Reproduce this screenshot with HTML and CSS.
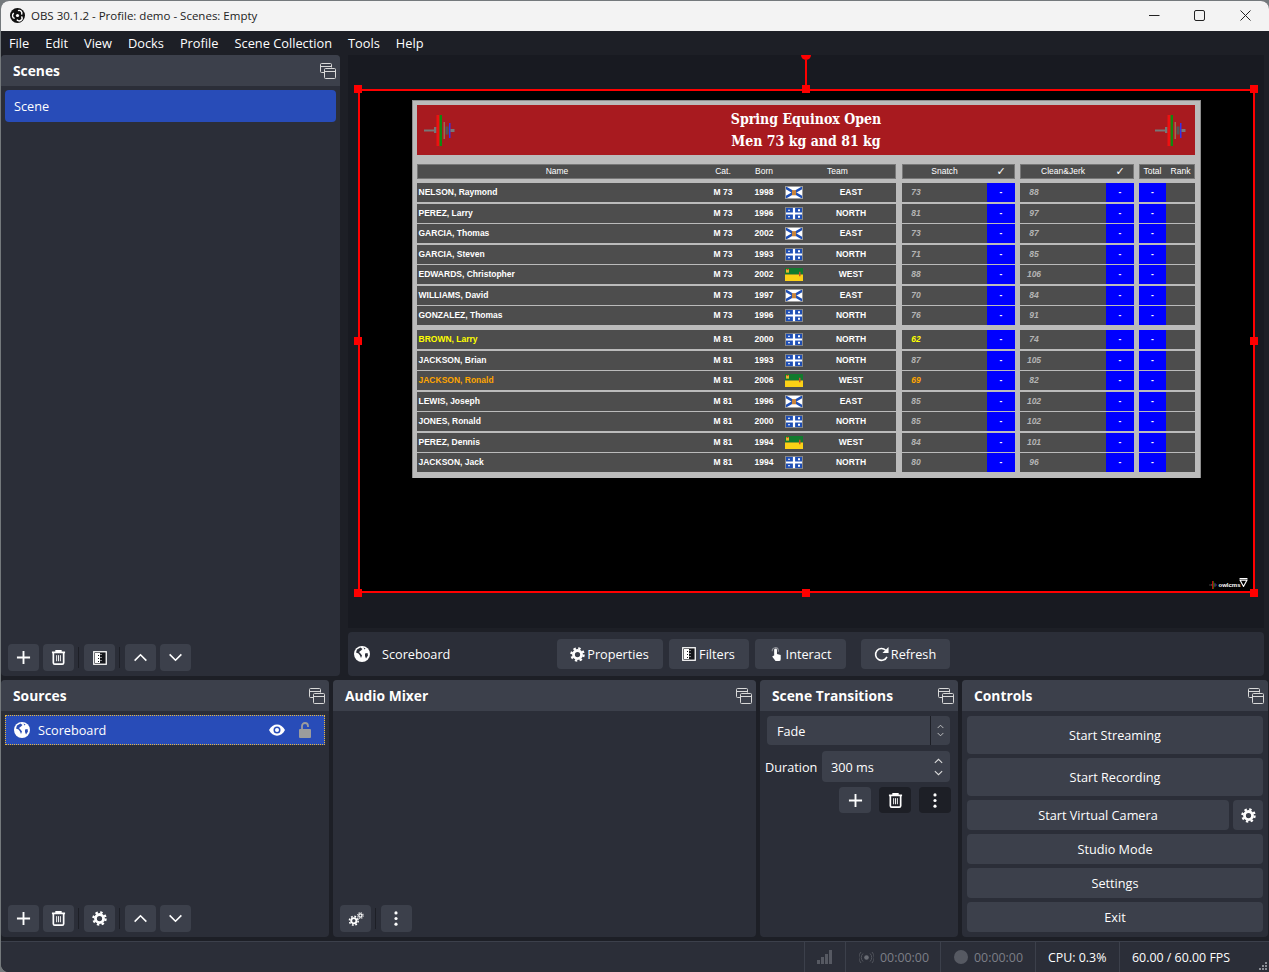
FILE: index.html
```html
<!DOCTYPE html>
<html lang="en">
<head>
<meta charset="utf-8">
<title>OBS 30.1.2 - Profile: demo - Scenes: Empty</title>
<link rel="stylesheet" href="styles.css">
</head>
<body>
<svg class="defs" width="0" height="0" aria-hidden="true">
  <symbol id="i-plus" viewBox="0 0 16 16"><path d="M8 1v14M1 8h14" fill="none" stroke="currentColor" stroke-width="2"/></symbol>
  <symbol id="i-trash" viewBox="0 0 16 16"><path d="M1 2.5h14M5.5 2.500V1h5v1.500M2.500 3v10.500a1.500 1.500 0 0 0 1.500 1.500h8a1.500 1.500 0 0 0 1.500-1.500V3" fill="none" stroke="currentColor" stroke-width="1.800"/><path d="M6 5.500v6.500M8 5.500v6.500M10 5.500v6.500" fill="none" stroke="currentColor" stroke-width="1"/></symbol>
  <symbol id="i-filter" viewBox="0 0 14 14"><rect x=".75" y=".75" width="12.500" height="12.500" fill="#15161b" stroke="currentColor" stroke-width="1.300"/><rect x="2" y="2" width="3" height="10" fill="currentColor"/><path d="M5 2h2v2H5zM6 4h1v1H6zM5 5h2v2H5zM6 7h1v1H6zM5 8h2v2H5zM6 10h1v1H6zM5 11h2v1H5zM7.500 3h1v1h-1zM7.500 6h1v1h-1zM7.500 9h1v1h-1z" fill="currentColor"/></symbol>
  <symbol id="i-up" viewBox="0 0 16 10"><path d="M1.500 8.500 8 2l6.500 6.500" fill="none" stroke="currentColor" stroke-width="1.800"/></symbol>
  <symbol id="i-down" viewBox="0 0 16 10"><path d="M1.500 1.500 8 8l6.500-6.500" fill="none" stroke="currentColor" stroke-width="1.800"/></symbol>
  <symbol id="i-gear" viewBox="0 0 16 16"><circle cx="8" cy="8" r="4.300" fill="none" stroke="currentColor" stroke-width="3"/><circle cx="8" cy="8" r="6.500" fill="none" stroke="currentColor" stroke-width="2.400" stroke-dasharray="2.550 2.550"/></symbol>
  <symbol id="i-gears" viewBox="0 0 18 16"><g fill="none" stroke="currentColor"><circle cx="6.500" cy="10" r="3" stroke-width="2.200"/><circle cx="6.500" cy="10" r="5" stroke-width="1.800" stroke-dasharray="2 1.930"/><circle cx="14" cy="4" r="1.800" stroke-width="1.400"/><circle cx="14" cy="4" r="3.200" stroke-width="1.200" stroke-dasharray="1.300 1.210"/></g></symbol>
  <symbol id="i-dots" viewBox="0 0 4 16"><circle cx="2" cy="2" r="1.700" fill="currentColor"/><circle cx="2" cy="8" r="1.700" fill="currentColor"/><circle cx="2" cy="14" r="1.700" fill="currentColor"/></symbol>
  <symbol id="i-float" viewBox="0 0 16 16"><path d="M.5 1.500a1 1 0 0 1 1-1h9a1 1 0 0 1 1 1v3M.5 1.500v7a1 1 0 0 0 1 1h2.500M.5 3.500h11" fill="none" stroke="currentColor"/><rect x="4.500" y="5.500" width="11" height="10" rx="1" fill="none" stroke="currentColor"/><path d="M4.500 8.500h11" stroke="currentColor"/></symbol>
  <symbol id="i-globe" viewBox="0 0 16 16"><circle cx="8" cy="8" r="8" fill="currentColor"/><path d="M6.500 1.500 3 3.500 2 6.500l2.500 1L6 9.500 7 12l1-2.500-1.500-2L5 6l2-1.500 1.500-1.500zM11 7.500l2.500-.5.500 2.500-2 3-1-2.500zM9.500 1.500l2 1-1 1z" fill="#2c4db5"/></symbol>
  <symbol id="i-globe-d" viewBox="0 0 16 16"><circle cx="8" cy="8" r="8" fill="currentColor"/><path d="M6.500 1.500 3 3.500 2 6.500l2.500 1L6 9.500 7 12l1-2.500-1.500-2L5 6l2-1.500 1.500-1.500zM11 7.500l2.500-.5.500 2.500-2 3-1-2.500zM9.500 1.500l2 1-1 1z" fill="#2b2e38"/></symbol>
  <symbol id="i-hand" viewBox="0 0 12 16"><path d="M3.500 9V3a1.500 1.500 0 0 1 3 0v4.500l4 1V13a2 2 0 0 1-2 2H5L1.500 10.500 2 9.500z" fill="currentColor"/><path d="M1.500 4.500a3.200 3.200 0 0 1 6.500-1V5" fill="none" stroke="#8d8f96" stroke-width="1.200"/></symbol>
  <symbol id="i-refresh" viewBox="0 0 16 16"><path d="M13.800 10.500A6.300 6.300 0 1 1 12.500 3.500" fill="none" stroke="currentColor" stroke-width="1.700"/><path d="M15.500 0v6.500H9z" fill="currentColor"/></symbol>
  <symbol id="bar" viewBox="0 0 31 31"><rect x="0" y="14.500" width="12" height="2" fill="#777"/><rect x="10" y="12" width="2.500" height="6" fill="#777"/><rect x="12.500" y="0" width="5" height="31" fill="#ee1111"/><rect x="15.500" y="0" width="2.500" height="31" fill="#118811"/><rect x="19.500" y="7" width="1.500" height="17" fill="#a06b4e"/><rect x="21.500" y="11.500" width="3" height="8" fill="#555"/><rect x="25" y="8" width="1.500" height="15" fill="#3333ee"/><rect x="26.500" y="14" width="4" height="3" fill="#777"/></symbol>
  <symbol id="f-ns" viewBox="0 0 18 14" preserveAspectRatio="none"><rect width="18" height="14" fill="#fff"/><path d="M0 1.500 18 12.500M18 1.500 0 12.500" stroke="#1f4fb5" stroke-width="2.600"/><rect x="7" y="4.500" width="4" height="5.500" fill="#c9843b"/><rect x=".5" y=".5" width="17" height="13" fill="none" stroke="#999"/></symbol>
  <symbol id="f-qc" viewBox="0 0 18 14" preserveAspectRatio="none"><rect width="18" height="14" fill="#1f4fb5"/><path d="M0 7h18M9 0v14" stroke="#fff" stroke-width="2.200"/><path d="M3 3h2v1H3zM13 2.500h2v2h-2zM3 10h2v1H3zM13 9.500h2v2h-2z" fill="#fff"/><rect x=".5" y=".5" width="17" height="13" fill="none" stroke="#888"/></symbol>
  <symbol id="f-sk" viewBox="0 0 18 14" preserveAspectRatio="none"><rect width="18" height="7" fill="#127a2e"/><rect y="7" width="18" height="7" fill="#fcd116"/><rect x="1" y="1" width="3" height="4" fill="#e6b82e"/><rect x="1.500" y="1" width="2" height="1.200" fill="#c33"/><path d="M14 4h1.500v5H14z" fill="#c8502a"/></symbol>
</svg>

<div class="window">
  <header class="titlebar">
    <svg class="obs-logo" viewBox="0 0 16 16"><circle cx="8" cy="8" r="8" fill="#111"/><g fill="none" stroke="#fff" stroke-width="1.500"><path d="M8.500 2.800a3 3 0 0 1 3.800 4.200"/><path d="M12.300 9a3 3 0 0 1-5 3.500"/><path d="M5 11a3 3 0 0 1-.9-5.500"/></g><circle cx="8" cy="8" r="1.700" fill="#fff"/></svg>
    <span class="title-text">OBS 30.1.2 - Profile: demo - Scenes: Empty</span>
    <div class="win-controls">
      <span class="win-btn"><svg width="11" height="11" viewBox="0 0 11 11"><path d="M0 5.500h10.500" stroke="#222"/></svg></span>
      <span class="win-btn"><svg width="11" height="11" viewBox="0 0 11 11"><rect x=".5" y=".5" width="10" height="10" rx="1.500" fill="none" stroke="#222"/></svg></span>
      <span class="win-btn"><svg width="11" height="11" viewBox="0 0 11 11"><path d="M.5.500l10 10M10.500.500l-10 10" stroke="#222"/></svg></span>
    </div>
  </header>

  <nav class="menubar">
    <span class="menu-item">File</span><span class="menu-item">Edit</span><span class="menu-item">View</span><span class="menu-item">Docks</span><span class="menu-item">Profile</span><span class="menu-item">Scene Collection</span><span class="menu-item">Tools</span><span class="menu-item">Help</span>
  </nav>

  <div class="upper">
    <section class="dock dock-scenes">
      <div class="dock-head"><span>Scenes</span><svg class="float-ic"><use href="#i-float"/></svg></div>
      <div class="dock-body">
        <div class="scene-item">Scene</div>
      </div>
      <div class="toolbar">
        <button class="tool"><svg class="ic16"><use href="#i-plus"/></svg></button>
        <button class="tool"><svg class="ic16"><use href="#i-trash"/></svg></button>
        <i class="sep"></i>
        <button class="tool"><svg class="ic14"><use href="#i-filter"/></svg></button>
        <i class="sep"></i>
        <button class="tool"><svg class="ic-ch"><use href="#i-up"/></svg></button>
        <button class="tool"><svg class="ic-ch"><use href="#i-down"/></svg></button>
      </div>
    </section>

    <div class="center">
      <div class="preview">
        <div class="canvas">
          <div class="board">
            <div class="board-title">
              <svg class="bar"><use href="#bar"/></svg>
              <div class="board-name">Spring Equinox Open<br>Men 73 kg and 81 kg</div>
              <svg class="bar"><use href="#bar"/></svg>
            </div>
            <div class="row row-head">
              <div class="g-ath"><b class="c-name">Name</b><b>Cat.</b><b>Born</b><b class="c-team2">Team</b></div>
              <div class="g-lift g-sn"><b class="h-lift">Snatch</b><b>✓</b></div>
              <div class="g-lift g-cj"><b class="h-lift">Clean&amp;Jerk</b><b>✓</b></div>
              <div class="g-tot"><b>Total</b><b>Rank</b></div>
            </div>

            <div class="group">
              <div class="row"><div class="g-ath"><b class="c-name">NELSON, Raymond</b><b>M 73</b><b>1998</b><svg class="flag"><use href="#f-ns"/></svg><b>EAST</b></div><div class="g-lift g-sn"><em>73</em><b class="blue">-</b></div><div class="g-lift g-cj"><em>88</em><b class="blue">-</b></div><div class="g-tot"><b class="blue">-</b><b></b></div></div>
              <div class="row"><div class="g-ath"><b class="c-name">PEREZ, Larry</b><b>M 73</b><b>1996</b><svg class="flag"><use href="#f-qc"/></svg><b>NORTH</b></div><div class="g-lift g-sn"><em>81</em><b class="blue">-</b></div><div class="g-lift g-cj"><em>97</em><b class="blue">-</b></div><div class="g-tot"><b class="blue">-</b><b></b></div></div>
              <div class="row"><div class="g-ath"><b class="c-name">GARCIA, Thomas</b><b>M 73</b><b>2002</b><svg class="flag"><use href="#f-ns"/></svg><b>EAST</b></div><div class="g-lift g-sn"><em>73</em><b class="blue">-</b></div><div class="g-lift g-cj"><em>87</em><b class="blue">-</b></div><div class="g-tot"><b class="blue">-</b><b></b></div></div>
              <div class="row"><div class="g-ath"><b class="c-name">GARCIA, Steven</b><b>M 73</b><b>1993</b><svg class="flag"><use href="#f-qc"/></svg><b>NORTH</b></div><div class="g-lift g-sn"><em>71</em><b class="blue">-</b></div><div class="g-lift g-cj"><em>85</em><b class="blue">-</b></div><div class="g-tot"><b class="blue">-</b><b></b></div></div>
              <div class="row"><div class="g-ath"><b class="c-name">EDWARDS, Christopher</b><b>M 73</b><b>2002</b><svg class="flag"><use href="#f-sk"/></svg><b>WEST</b></div><div class="g-lift g-sn"><em>88</em><b class="blue">-</b></div><div class="g-lift g-cj"><em>106</em><b class="blue">-</b></div><div class="g-tot"><b class="blue">-</b><b></b></div></div>
              <div class="row"><div class="g-ath"><b class="c-name">WILLIAMS, David</b><b>M 73</b><b>1997</b><svg class="flag"><use href="#f-ns"/></svg><b>EAST</b></div><div class="g-lift g-sn"><em>70</em><b class="blue">-</b></div><div class="g-lift g-cj"><em>84</em><b class="blue">-</b></div><div class="g-tot"><b class="blue">-</b><b></b></div></div>
              <div class="row"><div class="g-ath"><b class="c-name">GONZALEZ, Thomas</b><b>M 73</b><b>1996</b><svg class="flag"><use href="#f-qc"/></svg><b>NORTH</b></div><div class="g-lift g-sn"><em>76</em><b class="blue">-</b></div><div class="g-lift g-cj"><em>91</em><b class="blue">-</b></div><div class="g-tot"><b class="blue">-</b><b></b></div></div>
            </div>

            <div class="group">
              <div class="row"><div class="g-ath"><b class="c-name next">BROWN, Larry</b><b>M 81</b><b>2000</b><svg class="flag"><use href="#f-qc"/></svg><b>NORTH</b></div><div class="g-lift g-sn"><em class="next">62</em><b class="blue">-</b></div><div class="g-lift g-cj"><em>74</em><b class="blue">-</b></div><div class="g-tot"><b class="blue">-</b><b></b></div></div>
              <div class="row"><div class="g-ath"><b class="c-name">JACKSON, Brian</b><b>M 81</b><b>1993</b><svg class="flag"><use href="#f-qc"/></svg><b>NORTH</b></div><div class="g-lift g-sn"><em>87</em><b class="blue">-</b></div><div class="g-lift g-cj"><em>105</em><b class="blue">-</b></div><div class="g-tot"><b class="blue">-</b><b></b></div></div>
              <div class="row"><div class="g-ath"><b class="c-name after">JACKSON, Ronald</b><b>M 81</b><b>2006</b><svg class="flag"><use href="#f-sk"/></svg><b>WEST</b></div><div class="g-lift g-sn"><em class="after">69</em><b class="blue">-</b></div><div class="g-lift g-cj"><em>82</em><b class="blue">-</b></div><div class="g-tot"><b class="blue">-</b><b></b></div></div>
              <div class="row"><div class="g-ath"><b class="c-name">LEWIS, Joseph</b><b>M 81</b><b>1996</b><svg class="flag"><use href="#f-ns"/></svg><b>EAST</b></div><div class="g-lift g-sn"><em>85</em><b class="blue">-</b></div><div class="g-lift g-cj"><em>102</em><b class="blue">-</b></div><div class="g-tot"><b class="blue">-</b><b></b></div></div>
              <div class="row"><div class="g-ath"><b class="c-name">JONES, Ronald</b><b>M 81</b><b>2000</b><svg class="flag"><use href="#f-qc"/></svg><b>NORTH</b></div><div class="g-lift g-sn"><em>85</em><b class="blue">-</b></div><div class="g-lift g-cj"><em>102</em><b class="blue">-</b></div><div class="g-tot"><b class="blue">-</b><b></b></div></div>
              <div class="row"><div class="g-ath"><b class="c-name">PEREZ, Dennis</b><b>M 81</b><b>1994</b><svg class="flag"><use href="#f-sk"/></svg><b>WEST</b></div><div class="g-lift g-sn"><em>84</em><b class="blue">-</b></div><div class="g-lift g-cj"><em>101</em><b class="blue">-</b></div><div class="g-tot"><b class="blue">-</b><b></b></div></div>
              <div class="row"><div class="g-ath"><b class="c-name">JACKSON, Jack</b><b>M 81</b><b>1994</b><svg class="flag"><use href="#f-qc"/></svg><b>NORTH</b></div><div class="g-lift g-sn"><em>80</em><b class="blue">-</b></div><div class="g-lift g-cj"><em>96</em><b class="blue">-</b></div><div class="g-tot"><b class="blue">-</b><b></b></div></div>
            </div>
          </div>

          <div class="watermark">
            <svg class="wm-bar"><use href="#bar"/></svg><span class="wm-text">owlcms</span>
            <svg class="wm-tri" viewBox="0 0 8 8"><path d="M.5.500h7M1 2l3 5.500L7 2z" fill="none" stroke="#fff"/></svg>
          </div>

          <i class="rot-line"></i><i class="rot-knob"></i>
          <i class="h h-tl"></i><i class="h h-tc"></i><i class="h h-tr"></i>
          <i class="h h-ml"></i><i class="h h-mr"></i>
          <i class="h h-bl"></i><i class="h h-bc"></i><i class="h h-br"></i>
        </div>
      </div>

      <div class="context">
        <svg class="ic16 ctx-globe"><use href="#i-globe-d"/></svg>
        <span class="ctx-name">Scoreboard</span>
        <button class="ctx-btn w-prop"><svg class="ic-ctx"><use href="#i-gear"/></svg>Properties</button>
        <button class="ctx-btn w-filt"><svg class="ic-ctx14"><use href="#i-filter"/></svg>Filters</button>
        <button class="ctx-btn w-int"><svg class="ic-ctx"><use href="#i-hand"/></svg>Interact</button>
        <button class="ctx-btn w-ref"><svg class="ic-ctx"><use href="#i-refresh"/></svg>Refresh</button>
      </div>
    </div>
  </div>

  <div class="lower">
    <section class="dock dock-sources">
      <div class="dock-head low"><span>Sources</span><svg class="float-ic"><use href="#i-float"/></svg></div>
      <div class="dock-body">
        <div class="source-item">
          <svg class="ic16"><use href="#i-globe"/></svg>
          <span class="src-name">Scoreboard</span>
          <svg class="eye" viewBox="0 0 16 12"><path d="M0 6c3.500-7.500 12.500-7.500 16 0-3.500 7.500-12.500 7.500-16 0z" fill="#fff"/><circle cx="8" cy="6" r="3.500" fill="#284cb8"/><circle cx="8" cy="6" r="2" fill="#fff"/></svg>
          <svg class="lock" viewBox="0 0 12 16"><path d="M3 7V4a3 3 0 0 1 6 0v1" fill="none" stroke="#9c9c9c" stroke-width="1.800"/><rect x="0" y="7" width="12" height="9" rx="1" fill="#9c9c9c"/></svg>
        </div>
      </div>
      <div class="toolbar">
        <button class="tool"><svg class="ic16"><use href="#i-plus"/></svg></button>
        <button class="tool"><svg class="ic16"><use href="#i-trash"/></svg></button>
        <i class="sep"></i>
        <button class="tool"><svg class="ic15"><use href="#i-gear"/></svg></button>
        <i class="sep"></i>
        <button class="tool"><svg class="ic-ch"><use href="#i-up"/></svg></button>
        <button class="tool"><svg class="ic-ch"><use href="#i-down"/></svg></button>
      </div>
    </section>

    <section class="dock dock-mixer">
      <div class="dock-head low"><span>Audio Mixer</span><svg class="float-ic"><use href="#i-float"/></svg></div>
      <div class="dock-body"></div>
      <div class="toolbar">
        <button class="tool"><svg class="ic-gears"><use href="#i-gears"/></svg></button>
        <i class="sep"></i>
        <button class="tool"><svg class="ic-dots"><use href="#i-dots"/></svg></button>
      </div>
    </section>

    <section class="dock dock-trans">
      <div class="dock-head low"><span>Scene Transitions</span><svg class="float-ic"><use href="#i-float"/></svg></div>
      <div class="trans-body">
        <div class="combo">
          <span class="combo-text">Fade</span>
          <span class="combo-arrows"><svg class="tiny"><use href="#i-up"/></svg><svg class="tiny"><use href="#i-down"/></svg></span>
        </div>
        <div class="duration">
          <span class="dur-label">Duration</span>
          <div class="spin"><span>300 ms</span><span class="spin-arrows"><svg class="tiny2"><use href="#i-up"/></svg><svg class="tiny2"><use href="#i-down"/></svg></span></div>
        </div>
        <div class="trans-tools">
          <button class="tool"><svg class="ic16"><use href="#i-plus"/></svg></button>
          <button class="tool tool-dark"><svg class="ic16"><use href="#i-trash"/></svg></button>
          <button class="tool tool-dark"><svg class="ic-dots"><use href="#i-dots"/></svg></button>
        </div>
      </div>
    </section>

    <section class="dock dock-controls">
      <div class="dock-head low"><span>Controls</span><svg class="float-ic"><use href="#i-float"/></svg></div>
      <div class="controls-body">
        <button class="ctl ctl-big">Start Streaming</button>
        <button class="ctl ctl-big">Start Recording</button>
        <div class="ctl-row">
          <button class="ctl ctl-grow">Start Virtual Camera</button>
          <button class="ctl ctl-gear"><svg class="ic15"><use href="#i-gear"/></svg></button>
        </div>
        <button class="ctl">Studio Mode</button>
        <button class="ctl">Settings</button>
        <button class="ctl">Exit</button>
      </div>
    </section>
  </div>

  <footer class="statusbar">
    <div class="st st-sig"><svg width="15" height="14" viewBox="0 0 15 14"><path d="M0 10h3v4H0zM4 7h3v7H4zM8 4h3v10H8zM12 0h3v14h-3z" fill="#565962"/></svg></div>
    <div class="st st-live"><svg width="15" height="11" viewBox="0 0 15 11"><circle cx="7.500" cy="5.500" r="2.300" fill="#6a6d75"/><path d="M4 1.500a5.500 5.500 0 0 0 0 8M11 1.500a5.500 5.500 0 0 1 0 8M2 0a8 8 0 0 0 0 11M13 0a8 8 0 0 1 0 11" fill="none" stroke="#53565e"/></svg><span class="dim">00:00:00</span></div>
    <div class="st st-rec"><i class="rec-dot"></i><span class="dim">00:00:00</span></div>
    <div class="st st-cpu">CPU: 0.3%</div>
    <div class="st st-fps">60.00 / 60.00 FPS</div>
    <svg class="grip" width="8" height="8" viewBox="0 0 8 8"><path d="M6 0h2v2H6zM3 3h2v2H3zM6 3h2v2H6zM0 6h2v2H0zM3 6h2v2H3zM6 6h2v2H6z" fill="#8a8d95"/></svg>
  </footer>
</div>
</body>
</html>
```
FILE: styles.css
```css
* { box-sizing: border-box; }
html, body { margin: 0; padding: 0; }
body {
  width: 1269px;
  height: 972px;
  overflow: hidden;
  background: #74797c;
  font-family: "Open Sans", "Liberation Sans", sans-serif;
  font-size: 12.700px;
  color: #fefefe;
}
.defs { position: absolute; }
svg { display: block; flex: none; }
button { font: inherit; color: inherit; border: 0; padding: 0; margin: 0; }

.window {
  margin: 1px 0 0 1px;
  width: 1268px;
  height: 971px;
  display: flex;
  flex-direction: column;
  background: #1d1f26;
  border-radius: 8px 8px 0 8px;
  overflow: hidden;
}

/* title bar */
.titlebar {
  height: 30px;
  flex: none;
  display: flex;
  align-items: center;
  background: #f3f3f3;
  color: #222;
  font-size: 11.500px;
  padding: 0 0 1px 9px;
}
.obs-logo { width: 15px; height: 15px; }
.title-text { margin: 0 0 1px 6px; }
.win-controls { margin-left: auto; display: flex; margin-right: 1px; }
.win-btn { width: 45.500px; height: 30px; display: flex; align-items: center; justify-content: center; }

/* menu */
.menubar {
  height: 24px;
  flex: none;
  display: flex;
  align-items: center;
  font-size: 12.800px;
  background: #1d1f26;
}
.menu-item { padding: 0 8px; }

/* layout */
.upper { height: 621px; flex: none; display: flex; }
.lower { height: 257px; flex: none; margin-top: 4px; display: flex; gap: 4px; }

.dock { display: flex; flex-direction: column; background: #2b2e38; border-radius: 4px; overflow: hidden; }
.dock-scenes { width: 339px; flex: none; }
.dock-sources { width: 328px; }
.dock-mixer { width: 423px; }
.dock-trans { width: 198px; }
.dock-controls { width: 306px; }

.dock-head {
  height: 31px;
  flex: none;
  display: flex;
  align-items: center;
  justify-content: space-between;
  padding: 0 4px 0 12px;
  background: #3c404b;
  font-weight: 700;
  font-size: 13.800px;
}
.float-ic { width: 16px; height: 16px; color: #d8d8d8; }
.dock-body { flex: 1; padding: 4px; min-height: 0; }

.scene-item {
  height: 32px;
  display: flex;
  align-items: center;
  padding-left: 9px;
  background: #284cb8;
  border-radius: 4px;
}
.toolbar { flex: none; display: flex; align-items: center; height: 27px; margin: 0 0 5px 7px; gap: 4px; }
.tool {
  width: 31px;
  height: 27px;
  background: #3c404b;
  border-radius: 4px;
  display: flex;
  align-items: center;
  justify-content: center;
  color: #fefefe;
}
.tool-dark { background: #1d1f26; width: 32px; }
.sep { width: 1px; height: 21px; background: #1d1f26; margin-right: 1px; }
.ic16 { width: 15px; height: 15px; }
.ic15 { width: 15px; height: 15px; }
.ic14 { width: 14px; height: 14px; }
.ic-ch { width: 15px; height: 9px; }
.ic-gears { width: 16px; height: 14px; }
.ic-dots { width: 4px; height: 15px; margin-right: 1px; }

/* preview */
.center { flex: 1; display: flex; flex-direction: column; margin-left: 8px; margin-right: 5px; min-width: 0; }
.preview {
  height: 573px;
  flex: none;
  display: flex;
  align-items: center;
  justify-content: center;
  background: #181a21;
  overflow: hidden;
}
.canvas {
  position: relative;
  width: 895px;
  height: 502px;
  flex: none;
  background: #000;
  outline: 2px solid #ff0000;
  outline-offset: -1px;
  padding-top: 10px;
  margin-top: -1px;
}
.h { position: absolute; width: 8px; height: 8px; background: #ff0000; }
.h-tl { left: -5px; top: -5px; }
.h-tc { left: 443px; top: -5px; }
.h-tr { right: -4px; top: -5px; }
.h-ml { left: -5px; top: 247px; }
.h-mr { right: -4px; top: 247px; }
.h-bl { left: -5px; bottom: -5px; }
.h-bc { left: 443px; bottom: -5px; }
.h-br { right: -4px; bottom: -5px; }
.rot-line { position: absolute; left: 446px; top: -30px; width: 2px; height: 30px; background: #ff0000; }
.rot-knob { position: absolute; left: 442px; top: -40px; width: 10px; height: 10px; border-radius: 50%; background: #ff0000; }

.watermark {
  position: absolute;
  right: 6px;
  bottom: 3px;
  display: flex;
  align-items: center;
  color: #fff;
  font: 700 6px "Liberation Sans", sans-serif;
}
.wm-bar { width: 8px; height: 8px; }
.wm-text { margin-left: 2px; width: 20px; }
.wm-tri { width: 9px; height: 9px; margin-top: -5px; }

/* scoreboard */
.board {
  width: 789px;
  height: 378px;
  margin: 0 0 0 53px;
  padding: 4px 5px 4px 4px;
  background: #bbbbbb;
  border: 1px solid #8e8e8e;
  border-bottom: 0;
  font-family: "Liberation Sans", Arial, sans-serif;
  font-size: 8.500px;
  color: #fff;
}
.board-title {
  height: 50px;
  display: flex;
  align-items: center;
  justify-content: space-between;
  padding: 0 8px 0 7px;
  background: #a81a1f;
}
.bar { width: 31px; height: 31px; }
.board-name {
  font-family: "DejaVu Serif Condensed", "DejaVu Serif", serif;
  font-stretch: condensed;
  font-weight: 700;
  font-size: 14px;
  line-height: 22px;
  text-align: center;
  padding-left: 2px;
}
.group { display: flex; flex-direction: column; gap: 1.500px; margin-top: 5px; }
.row { display: flex; height: 19px; }
.row b, .row em { display: flex; align-items: center; justify-content: center; padding: 0 0 1px 1px; }
.g-ath { width: 479px; display: grid; grid-template-columns: 280px 52px 30px 27px 90px; background: #4d4d4d; align-items: stretch; }
.g-ath .flag { width: 18px; height: 13px; margin: 3px 0 0 6px; }
.g-lift { display: flex; background: #4d4d4d; }
.g-sn { width: 113px; margin-left: 6px; }
.g-cj { width: 114px; margin-left: 5px; }
.g-tot { width: 56px; margin-left: 5px; display: grid; grid-template-columns: 27px 29px; background: #4d4d4d; }
.g-lift em { width: 28px; font-style: italic; font-weight: 700; color: #b4b4b4; margin-right: auto; }
.row .c-name { justify-content: flex-start; padding-left: 2px; }
.blue { background: #0000ff; width: 28px; flex: none; }
.g-tot .blue { width: 27px; }
.next { color: #ffff00 !important; }
.after { color: #ffa500 !important; }

.row-head { height: 15px; margin-top: 9px; }
.row-head + .group { margin-top: 4px; }
.row-head b { font-weight: 400; }
.row-head .c-name { justify-content: center; padding-left: 1px; }
.row-head .c-team2 { grid-column: 4 / 6; }
.row-head .g-ath, .row-head .g-lift, .row-head .g-tot { box-shadow: inset 0 0 0 1px #777; }
.h-lift { flex: 1; }
.row-head .g-lift b:last-child { width: 28px; flex: none; font-size: 11px; font-family: "DejaVu Sans", sans-serif; font-weight: 700; }

/* context bar */
.context {
  height: 44px;
  margin-top: 4px;
  flex: none;
  display: flex;
  align-items: center;
  background: #2b2e38;
  border-radius: 4px;
  padding-left: 6px;
  gap: 6px;
}
.ctx-name { width: 175px; margin-left: 6px; margin-right: -6px; }
.ctx-btn {
  height: 30px;
  display: flex;
  align-items: center;
  justify-content: center;
  gap: 2px;
  padding-right: 1px;
  background: #3c404b;
  border-radius: 4px;
}
.w-prop { width: 106px; }
.w-filt { width: 80px; }
.w-int { width: 91px; }
.w-ref { width: 89px; margin-left: 9px; }
.ic-ctx { width: 15px; height: 15px; }
.ic-ctx14 { width: 14px; height: 14px; margin-right: 1px; }
.context .ic16 { width: 16px; height: 16px; }
.source-item .ic16 { width: 16px; height: 16px; }

/* source row */
.source-item {
  height: 30px;
  display: flex;
  align-items: center;
  padding-left: 9px;
  background: #284cb8;
  outline: 1px dotted #e8b93c;
  outline-offset: -1px;
  border-radius: 1px;
}
.src-name { margin-left: 8px; flex: 1; }
.eye { width: 16px; height: 12px; }
.lock { width: 12px; height: 16px; margin: 0 14px 0 14px; }

/* transitions */
.trans-body { flex: 1; display: flex; flex-direction: column; padding: 5px 7px 0 5px; }
.combo {
  height: 29px;
  margin-left: 2px;
  display: flex;
  align-items: center;
  background: #3c404b;
  border-radius: 4px;
  width: 183px;
}
.combo-text { flex: 1; padding-left: 10px; }
.combo-arrows { width: 20px; height: 100%; border-left: 1px solid #1d1f26; display: flex; flex-direction: column; align-items: center; justify-content: center; gap: 3px; }
.tiny { width: 7px; height: 5px; color: #ddd; }
.duration { display: flex; align-items: center; margin-top: 6px; }
.dur-label { width: 57px; }
.spin {
  width: 128px;
  height: 31px;
  display: flex;
  align-items: center;
  justify-content: space-between;
  background: #3c404b;
  border-radius: 4px;
  padding: 0 7px 0 9px;
}
.spin-arrows { display: flex; flex-direction: column; align-items: center; gap: 6px; }
.tiny2 { width: 9px; height: 6px; color: #ddd; }
.trans-tools { display: flex; justify-content: flex-end; gap: 8px; margin-top: 5px; }
.trans-tools .tool { width: 32px; height: 26px; }

/* controls */
.controls-body { flex: 1; display: flex; flex-direction: column; gap: 4px; padding: 5px 5px 0 5px; }
.ctl { height: 30px; background: #3c404b; border-radius: 4px; display: flex; align-items: center; justify-content: center; flex: none; }
.ctl-big { height: 38px; }
.ctl-row { display: flex; gap: 4px; }
.ctl-grow { flex: 1; }
.ctl-gear { width: 30px; }

/* status */
.statusbar {
  height: 31px;
  flex: none;
  margin-top: 4px;
  display: flex;
  justify-content: flex-end;
  align-items: stretch;
  background: #2b2e38;
  border-top: 1px solid #3c404b;
  font-size: 12.400px;
  position: relative;
}
.st { display: flex; align-items: center; border-left: 1px solid #3c404b; }
.dim { color: #7c7f87; }
.st-sig { width: 41px; padding-left: 12px; }
.st-live { width: 95px; padding-left: 13px; gap: 6px; }
.st-rec { width: 95px; padding-left: 13px; gap: 6px; }
.rec-dot { width: 14px; height: 14px; border-radius: 50%; background: #565962; }
.st-cpu { width: 84px; padding-left: 12px; }
.st-fps { width: 150px; padding-left: 12px; }
.grip { position: absolute; right: 2px; bottom: 2px; }
```
